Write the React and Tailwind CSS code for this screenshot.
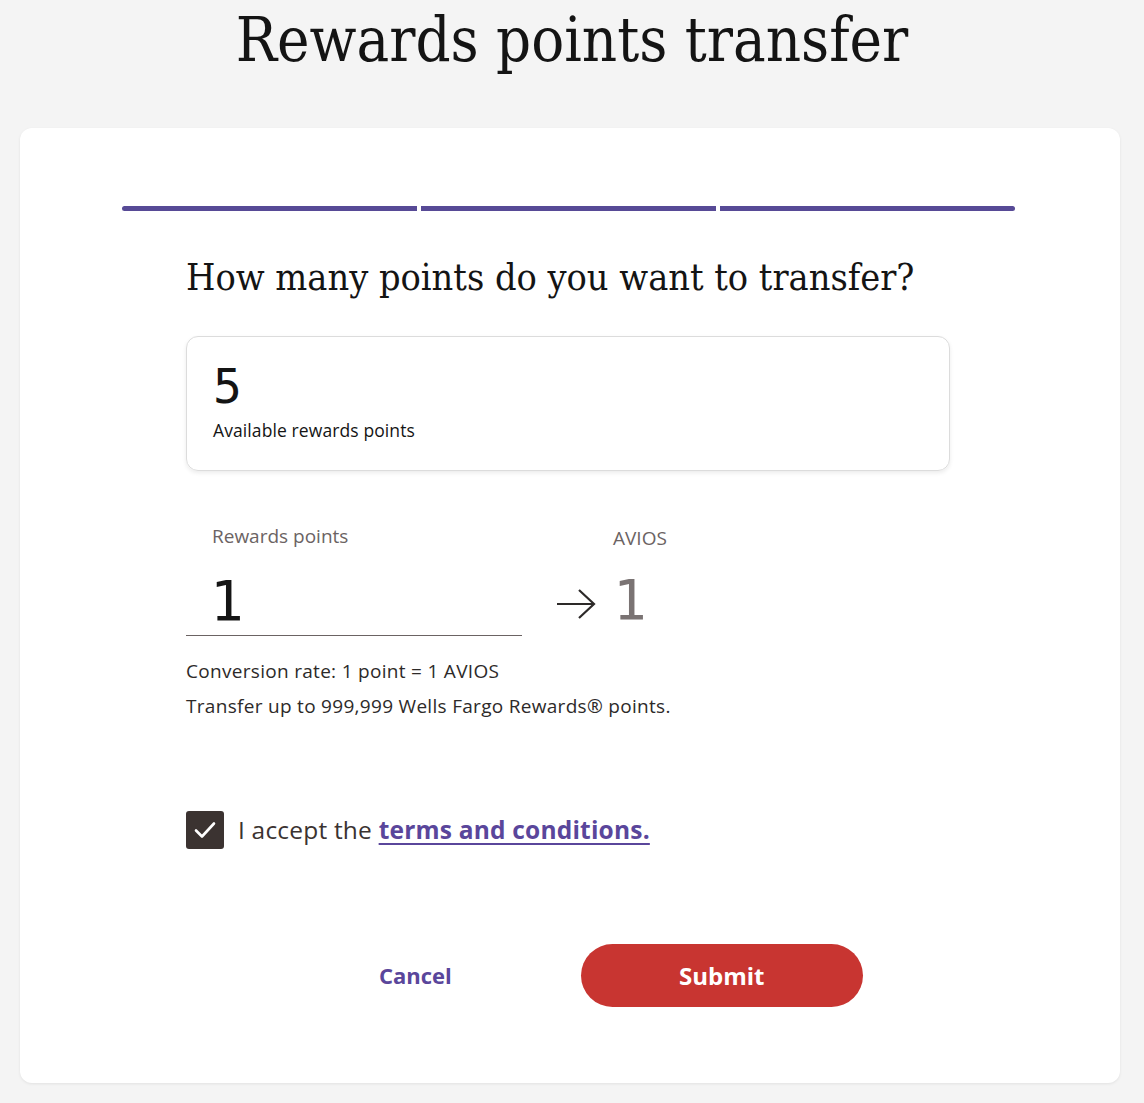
import { useState } from "react";

const serif = { fontFamily: '"DejaVu Serif Condensed", "Liberation Serif", serif' };
const mono = { fontFamily: '"DejaVu Sans Mono", monospace', fontWeight: 300 };

function ProgressBar() {
  return (
    <div className="flex gap-[4px] pl-[102px] pr-[105px]">
      <div className="h-[5px] flex-1 rounded-l-full bg-[#574a96]"></div>
      <div className="h-[5px] flex-1 bg-[#574a96]"></div>
      <div className="h-[5px] flex-1 rounded-r-full bg-[#574a96]"></div>
    </div>
  );
}

function App() {
  const [points, setPoints] = useState("1");
  const [accepted, setAccepted] = useState(true);

  return (
    <div className="min-h-screen bg-[#f4f4f4] pl-[20px] pr-[24px] pb-[21px] font-['Open_Sans','Noto_Sans',sans-serif] text-[#2d2a29]">
      <h1 className="pt-[2px] pl-[4px] text-center text-[61px] leading-[76px] text-[#141414]" style={serif}>
        Rewards points transfer
      </h1>

      <div className="mt-[50px] rounded-[12px] bg-white pt-[78px] pb-[76px] shadow-[0_1px_3px_rgba(0,0,0,0.08)]">
        <ProgressBar />

        <div className="ml-[166px] w-[764px] pt-[44px]">
          <h2 className="text-[37.5px] leading-[44px] text-[#141414]" style={serif}>
            How many points do you want to transfer?
          </h2>

          <div className="mt-[37px] h-[135px] rounded-[12px] border border-[#dcdcdc] px-[26px] pt-[24px] shadow-[0_2px_4px_rgba(0,0,0,0.08)]">
            <div className="text-[48px] leading-[50px] text-[#141414]" style={mono}>
              5
            </div>
            <div className="mt-[8px] text-[17.5px] leading-[22px] tracking-[0.1px] text-[#141414]">Available rewards points</div>
          </div>

          <div className="mt-[53px] flex items-end">
            <div className="w-[336px]">
              <div className="pl-[26px] text-[19px] leading-[24px] text-[#6b6363]">Rewards points</div>
              <input
                value={points}
                onChange={(e) => setPoints(e.target.value)}
                className="mt-[12px] h-[76px] w-full border-b border-[#6b6363] bg-transparent pl-[24px] pt-[6px] text-[56px] text-[#141414] outline-none"
                style={mono}
              />
            </div>
            <div className="ml-[33px] flex items-end pb-[6px]">
              <svg width="42" height="34" viewBox="0 0 42 34" fill="none" stroke="#2d2a29" strokeWidth="2.2" className="mb-[9px]">
                <path d="M2 17h37M24 3l15 14-15 14" />
              </svg>
              <div className="ml-[16px]">
                <div className="text-[19px] leading-[24px] text-[#6b6363]">AVIOS</div>
                <div className="mt-[20px] text-[56px] leading-[60px] text-[#7a7373]" style={mono}>
                  1
                </div>
              </div>
            </div>
          </div>

          <p className="mt-[22px] text-[19px] leading-[26px] tracking-[0.3px]">Conversion rate: 1 point = 1 AVIOS</p>
          <p className="mt-[9px] text-[19px] leading-[26px] tracking-[0.3px]">Transfer up to 999,999 Wells Fargo Rewards® points.</p>

          <label className="mt-[92px] flex items-center gap-[14px]">
            <button
              type="button"
              onClick={() => setAccepted(!accepted)}
              className="flex h-[38px] w-[38px] items-center justify-center rounded-[3px] bg-[#3b3331]"
            >
              {accepted && (
                <svg width="24" height="20" viewBox="0 0 24 20" fill="none" stroke="white" strokeWidth="2.6" strokeLinecap="round" strokeLinejoin="round">
                  <path d="M3 10.5l6 6L21 3.5" />
                </svg>
              )}
            </button>
            <span className="text-[24.5px] leading-[30px] tracking-[0.2px] text-[#3b3331]">
              I accept the{" "}
              <a href="#" className="font-bold text-[#5a469b] underline underline-offset-[4px] decoration-[2px]">
                terms and conditions.
              </a>
            </span>
          </label>

          <div className="mt-[95px] flex items-center pl-[193px] gap-[129px]">
            <button className="text-[22px] font-bold text-[#5a469b]">Cancel</button>
            <button className="h-[63px] w-[282px] rounded-full bg-[#c83531] text-[24px] font-bold text-white">Submit</button>
          </div>
        </div>
      </div>
    </div>
  );
}

export default App;
